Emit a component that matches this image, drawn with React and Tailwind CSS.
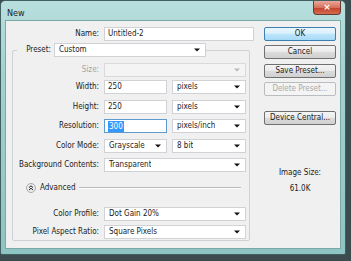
import { Fragment } from "react";

// Photoshop "New" document dialog, Win7 Aero frame

function Arrow({ disabled }) {
  return (
    <svg width="6" height="4" viewBox="0 0 6 4" className="shrink-0">
      <path d="M0 0.5h6L3 3.5z" fill={disabled ? "#b8b8b8" : "#111"} />
    </svg>
  );
}

function Select({ value, w, disabled }) {
  return (
    <div
      className={`h-[14px] flex items-center justify-between pl-[4px] pr-[5px] border ${
        disabled ? "bg-[#f4f4f4] border-[#dadada]" : "bg-white border-[#d0d2d6]"
      }`}
      style={{ width: w }}
    >
      <span className="leading-[12px] truncate">{value}</span>
      <Arrow disabled={disabled} />
    </div>
  );
}

function Input({ value, w, selected }) {
  return (
    <div
      className={`h-[14px] flex items-center pl-[3px] bg-white border ${
        selected ? "border-[#5b9bd0]" : "border-[#d0d2d6]"
      }`}
      style={{ width: w }}
    >
      {selected ? (
        <span className="bg-[#3399ff] text-white leading-[11px] px-[1px]">{value}</span>
      ) : (
        <span className="leading-[12px]">{value}</span>
      )}
    </div>
  );
}

function Row({ label, mt, dim, pl, children }) {
  return (
    <div className="flex items-center h-[14px]" style={{ marginTop: mt, paddingLeft: pl }}>
      <div className={`w-[87px] text-right pr-[1px] ${dim ? "text-[#a5a5a5]" : ""}`}>{label}</div>
      <div className="ml-[4px] flex gap-[5px]">{children}</div>
    </div>
  );
}

function Button({ children, primary, disabled, mt }) {
  let cls = "border-[#707070] bg-[linear-gradient(180deg,#f4f4f4_0%,#ececec_45%,#dcdcdc_50%,#d0d0d0_100%)] text-[#1a1a1a]";
  if (primary)
    cls = "border-[#3c7fb1] bg-[linear-gradient(180deg,#eaf6fd_0%,#d9f0fc_45%,#bee6fd_50%,#a7d9f5_100%)] text-[#1a1a1a]";
  if (disabled) cls = "border-[#b9bdc0] bg-[#f4f4f4] text-[#a8a8a8]";
  return (
    <div
      className={`w-[72px] h-[14px] rounded-[2px] border flex items-center justify-center leading-[12px] ${cls}`}
      style={{ marginTop: mt }}
    >
      {children}
    </div>
  );
}

export default function App() {
  return (
    <div className="w-[351px] h-[261px] bg-[#3c4b4d] font-['Tahoma','DejaVu_Sans_Condensed','Liberation_Sans',sans-serif] text-[8px] text-[#1b1b1b]">
      <div className="w-[346px] h-[255px] border border-[#41605f] rounded-t-[5px] rounded-b-[2px] bg-[linear-gradient(180deg,#b8dfde_0%,#a2d1d0_30%,#8ec4c3_100%)] flex flex-col">
        {/* title bar */}
        <div className="h-[19px] flex items-start justify-between">
          <div className="pl-[6px] pt-[7px] text-[9px] leading-[10px] text-[#222]">New</div>
          <div className="mr-[4px] w-[28px] h-[14px] rounded-b-[4px] border border-t-0 border-[#6d3a33] bg-[linear-gradient(180deg,#e9a79a_0%,#d8705d_50%,#c5432c_55%,#d36d50_100%)] flex items-center justify-center">
            <span className="text-white font-bold text-[9px] leading-[9px] font-['DejaVu_Sans',sans-serif]">×</span>
          </div>
        </div>

        {/* client */}
        <div className="mx-[4px] h-[229px] bg-[#f0f0f0] border border-[#7aa9a8] flex">
          {/* left column */}
          <div className="w-[252px] flex flex-col">
            <Row label="Name:" mt={6} pl={7}>
              <Input value="Untitled-2" w={150} />
            </Row>

            {/* group box */}
            <div className="ml-[6px] mt-[9px] w-[238px] border border-[#cdd2d6] rounded-[2px] flex flex-col pb-[1px]">
              <div className="flex items-center h-[14px] -mt-[8px]">
                <div className="ml-[4px] w-[37px] bg-[#f0f0f0] text-right pr-[3px]">Preset:</div>
                <Select value="Custom" w={152} />
              </div>
              <Row label="Size:" mt={6} dim>
                <Select value="" w={142} disabled />
              </Row>
              <Row label="Width:" mt={3}>
                <Input value="250" w={63} />
                <Select value="pixels" w={74} />
              </Row>
              <Row label="Height:" mt={6}>
                <Input value="250" w={63} />
                <Select value="pixels" w={74} />
              </Row>
              <Row label="Resolution:" mt={5}>
                <Input value="300" w={63} selected />
                <Select value="pixels/inch" w={74} />
              </Row>
              <Row label="Color Mode:" mt={6}>
                <Select value="Grayscale" w={63} />
                <Select value="8 bit" w={74} />
              </Row>
              <Row label="Background Contents:" mt={5}>
                <Select value="Transparent" w={142} />
              </Row>

              {/* advanced */}
              <div className="flex items-center h-[12px] mt-[10px] pl-[13px]">
                <svg width="10" height="10" viewBox="0 0 10 10" className="shrink-0">
                  <circle cx="5" cy="5" r="4.5" fill="#ececec" stroke="#a9a9a9" />
                  <path d="M3 4.6L5 2.8L7 4.6M3 7L5 5.2L7 7" fill="none" stroke="#222" strokeWidth="1" />
                </svg>
                <span className="ml-[4px] leading-[12px]">Advanced</span>
                <div className="ml-[3px] w-[162px] h-[2px] border-t border-[#b9b9b9] border-b border-b-white" />
              </div>

              <Row label="Color Profile:" mt={13}>
                <Select value="Dot Gain 20%" w={142} />
              </Row>
              <Row label="Pixel Aspect Ratio:" mt={4}>
                <Select value="Square Pixels" w={142} />
              </Row>
            </div>
          </div>

          {/* right column */}
          <div className="ml-[6px] flex flex-col items-center w-[72px]">
            <Button primary mt={6}>OK</Button>
            <Button mt={4}>Cancel</Button>
            <Button mt={5}>Save Preset...</Button>
            <Button disabled mt={4}>Delete Preset...</Button>
            <Button mt={15}>Device Central...</Button>
            <div className="mt-[42px] leading-[11px]">Image Size:</div>
            <div className="mt-[5px] leading-[11px]">61.0K</div>
          </div>
        </div>
      </div>
    </div>
  );
}
